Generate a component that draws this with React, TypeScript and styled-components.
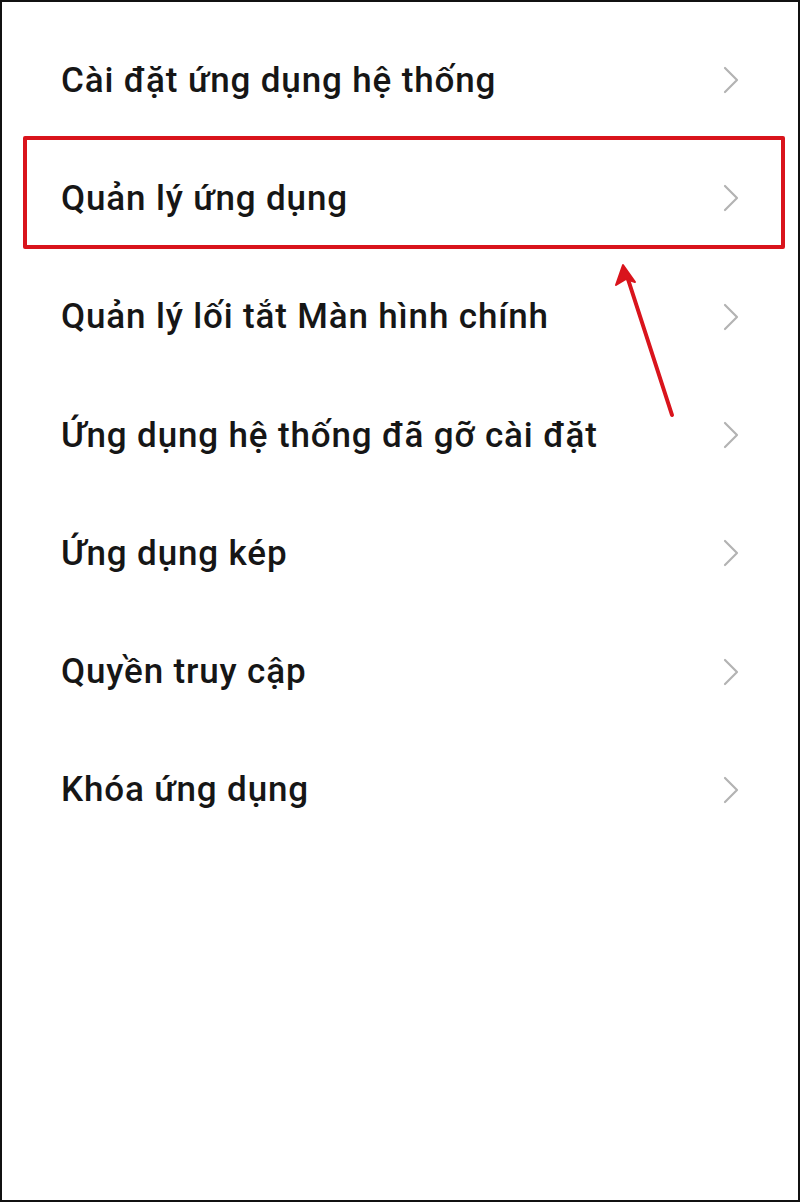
import React from 'react';
import styled, { createGlobalStyle } from 'styled-components';

const GlobalStyle = createGlobalStyle`
    html, body {
        margin: 0;
        padding: 0;
        background: #ffffff;
    }
    * {
        box-sizing: border-box;
    }
`;

const items = [
    'Cài đặt ứng dụng hệ thống',
    'Quản lý ứng dụng',
    'Quản lý lối tắt Màn hình chính',
    'Ứng dụng hệ thống đã gỡ cài đặt',
    'Ứng dụng kép',
    'Quyền truy cập',
    'Khóa ứng dụng',
];

export const Frame = styled.div`
    position: relative;
    width: 800px;
    height: 1202px;
    border: 2px solid #111111;
    background: #ffffff;
    font-family: Roboto, 'Noto Sans', 'Liberation Sans', sans-serif;
`;

export const List = styled.ul`
    list-style: none;
    margin: 0;
    padding: 19px 0 0;
`;

export const Row = styled.li`
    height: 118.3px;
    display: flex;
    align-items: center;
    justify-content: space-between;
    padding: 0 58px 0 59px;
`;

export const Label = styled.span`
    font-size: 35px;
    font-weight: 500;
    color: #161616;
    letter-spacing: 0.85px;
`;

export const Highlight = styled.div`
    position: absolute;
    left: 21px;
    top: 134px;
    width: 762px;
    height: 113px;
    border: 4px solid #d9141c;
    border-radius: 2px;
    pointer-events: none;
`;

export const ArrowLayer = styled.svg`
    position: absolute;
    left: 600px;
    top: 255px;
    overflow: visible;
    pointer-events: none;
`;

const Chevron = () => (
    <svg width="18" height="30" viewBox="0 0 18 30">
        <path
            d="M3 3 L15 15 L3 27"
            fill="none"
            stroke="#b3b3b3"
            strokeWidth="2.2"
            strokeLinecap="round"
            strokeLinejoin="round"
        />
    </svg>
);

export default function App() {
    return (
        <>
            <GlobalStyle />
            <Frame>
                <List>
                    {items.map((text) => (
                        <Row key={text}>
                            <Label>{text}</Label>
                            <Chevron />
                        </Row>
                    ))}
                </List>
                <Highlight />
                <ArrowLayer width="90" height="170" viewBox="0 0 90 170">
                    <line x1="70" y1="158" x2="24" y2="16" stroke="#d9141c" strokeWidth="4" strokeLinecap="round" />
                    <path d="M21 8 L14 28 L24 22 L33 25 Z" fill="#d9141c" stroke="#d9141c" strokeWidth="2" strokeLinejoin="round" />
                </ArrowLayer>
            </Frame>
        </>
    );
}
